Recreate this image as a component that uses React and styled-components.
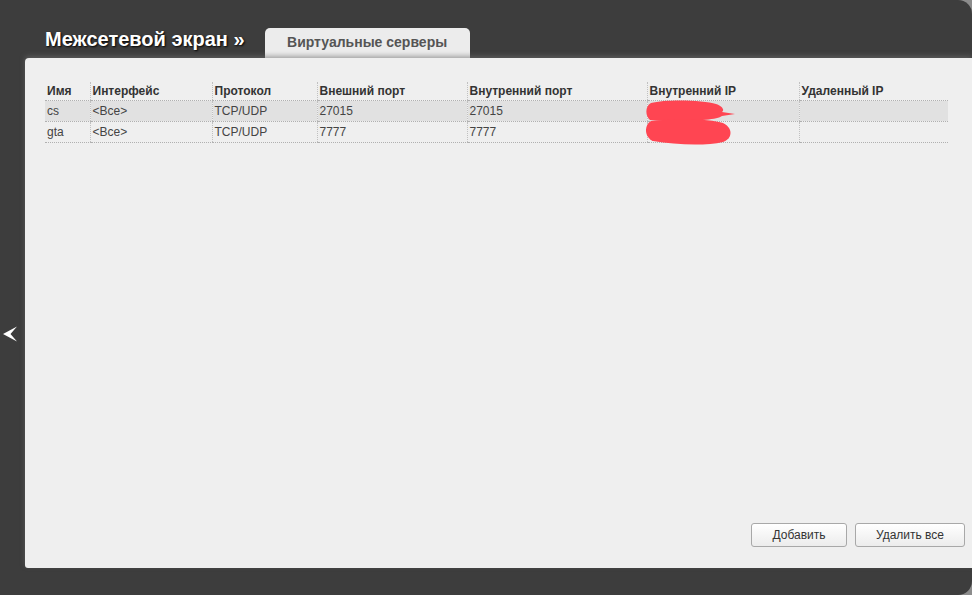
import React from 'react';
import styled, { createGlobalStyle } from 'styled-components';

const GlobalStyle = createGlobalStyle`
  html, body {
    margin: 0;
    padding: 0;
    background: #8c8c8c;
  }
  body {
    font-family: "Liberation Sans", Arial, sans-serif;
  }
`;

const columns = [
  { key: 'name', title: 'Имя', width: 45 },
  { key: 'iface', title: 'Интерфейс', width: 122 },
  { key: 'proto', title: 'Протокол', width: 105 },
  { key: 'ext', title: 'Внешний порт', width: 150 },
  { key: 'int', title: 'Внутренний порт', width: 180 },
  { key: 'ip', title: 'Внутренний IP', width: 152 },
  { key: 'remote', title: 'Удаленный IP', width: 149 },
];

const rows = [
  { name: 'cs', iface: '<Все>', proto: 'TCP/UDP', ext: '27015', int: '27015', ip: '', remote: '' },
  { name: 'gta', iface: '<Все>', proto: 'TCP/UDP', ext: '7777', int: '7777', ip: '', remote: '' },
];

const ArrowLeft = () => (
  <svg width="16" height="18" viewBox="0 0 16 18">
    <path d="M1 9 L15 1.5 L8.5 9 L15 16.5 Z" fill="#fff" />
  </svg>
);

const Scribble = () => (
  <ScribbleSvg width="96" height="46" viewBox="0 0 96 46">
    <path
      d="M5 3 C20 -1 58 0 70 4 C76 6 79 10 76 12 L89 14 L76 16 C70 21 30 22 4 20 C-1 16 -1 6 5 3 Z"
      fill="#ff4552"
    />
    <path
      d="M5 21 C30 18 66 19 77 23 C87 28 87 38 77 42 C60 46 30 45 7 41 C-2 37 -2 25 5 21 Z"
      fill="#ff4552"
    />
  </ScribbleSvg>
);

export default function App() {
  return (
    <>
      <GlobalStyle />
      <Frame>
        <Header>
          <Title>Межсетевой экран »</Title>
          <Tab>Виртуальные серверы</Tab>
        </Header>
        <Body>
          <Gutter>
            <ArrowLeft />
          </Gutter>
          <Panel>
            <Table>
              <colgroup>
                {columns.map((c) => (
                  <col key={c.key} style={{ width: c.width }} />
                ))}
              </colgroup>
              <thead>
                <tr>
                  {columns.map((c) => (
                    <Th key={c.key}>{c.title}</Th>
                  ))}
                </tr>
              </thead>
              <tbody>
                {rows.map((r, i) => (
                  <Tr key={r.name} $shaded={i === 0}>
                    {columns.map((c) => (
                      <Td key={c.key}>
                        {r[c.key]}
                        {c.key === 'ip' && i === 0 && <Scribble />}
                      </Td>
                    ))}
                  </Tr>
                ))}
              </tbody>
            </Table>
            <Actions>
              <Button $width={96}>Добавить</Button>
              <Button $width={110}>Удалить все</Button>
            </Actions>
          </Panel>
        </Body>
      </Frame>
    </>
  );
}

const Frame = styled.div`
  display: flex;
  flex-direction: column;
  width: 972px;
  height: 595px;
  background: #3d3d3d;
  border-radius: 0 14px 14px 0;
  overflow: hidden;
`;

const Header = styled.div`
  display: flex;
  align-items: flex-end;
  height: 58px;
  padding-left: 45px;
  box-sizing: border-box;
`;

const Title = styled.h1`
  margin: 0 20px 7px 0;
  font-size: 20px;
  font-weight: bold;
  color: #fff;
  text-shadow: 1px 1px 2px #000;
`;

const Tab = styled.div`
  display: flex;
  align-items: center;
  justify-content: center;
  width: 205px;
  height: 30px;
  padding-bottom: 2px;
  box-sizing: border-box;
  background: #ececec;
  border-radius: 5px 5px 0 0;
  font-size: 14px;
  font-weight: bold;
  color: #555;
`;

const Body = styled.div`
  display: flex;
  height: 510px;
`;

const Gutter = styled.div`
  width: 25px;
  padding: 267px 0 0 2px;
  box-sizing: border-box;
`;

const Panel = styled.div`
  flex: 1;
  display: flex;
  flex-direction: column;
  justify-content: space-between;
  padding: 24px 7px 21px 20px;
  background: #efefef;
  border-radius: 4px 0 0 3px;
  box-shadow: 0 -2px 5px rgba(110, 110, 110, 0.6);
`;

const Table = styled.table`
  width: 903px;
  border-collapse: collapse;
  table-layout: fixed;
  font-size: 12px;
`;

const Th = styled.th`
  height: 18px;
  padding: 0 0 0 2px;
  text-align: left;
  font-weight: bold;
  color: #333;
  border-bottom: 1px dotted #b0b0b0;
  & + & {
    border-left: 1px dotted #c0c0c0;
  }
`;

const Tr = styled.tr`
  background: ${(p) => (p.$shaded ? '#e1e1e1' : 'transparent')};
`;

const Td = styled.td`
  position: relative;
  height: 20px;
  padding: 0 0 0 2px;
  color: #444;
  border-bottom: 1px dotted #b0b0b0;
  & + & {
    border-left: 1px dotted #c0c0c0;
  }
`;

const ScribbleSvg = styled.svg`
  position: absolute;
  left: -2px;
  top: -1px;
  z-index: 1;
`;

const Actions = styled.div`
  display: flex;
  justify-content: flex-end;
  gap: 8px;
`;

const Button = styled.button`
  width: ${(p) => p.$width}px;
  height: 24px;
  padding: 0;
  font-family: "Liberation Sans", Arial, sans-serif;
  font-size: 12px;
  color: #333;
  background: linear-gradient(#ffffff, #ececec);
  border: 1px solid #a8a8a8;
  border-radius: 3px;
`;
